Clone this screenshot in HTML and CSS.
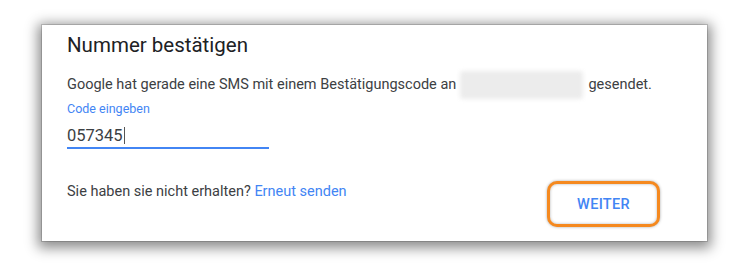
FILE: index.html
```html
<!DOCTYPE html>
<html lang="de">
  <head>
    <meta charset="UTF-8" />
    <title>Nummer bestätigen</title>
    <link rel="stylesheet" href="styles.css">
  </head>
  <body>
    <div class="card">
      <h1>Nummer bestätigen</h1>
      <p class="info">
        Google hat gerade eine SMS mit einem Bestätigungscode an
        <span class="masked"></span> gesendet.
      </p>
      <label class="label">Code eingeben</label>
      <div class="field">057345<span class="caret"></span></div>
      <div class="footer">
        <p class="resend">Sie haben sie nicht erhalten? <a href="#">Erneut senden</a></p>
        <button class="next">WEITER</button>
      </div>
    </div>
  </body>
</html>
```

FILE: styles.css
```css
html {
  background: white;
}
body {
  margin: 0;
  min-height: 267px;
  box-sizing: border-box;
  padding: 25px 0 0 42px;
  font-family: Roboto, "Noto Sans", sans-serif;
}
.card {
  width: 665px;
  height: 216px;
  box-sizing: border-box;
  padding: 7px 47px 12px 25px;
  background: white;
  box-shadow: 0 0 0 1px rgba(0, 0, 0, 0.15), 0 3px 12px 4px rgba(0, 0, 0, 0.45);
}
h1 {
  margin: 0;
  font-size: 20.5px;
  line-height: 26px;
  font-weight: 400;
  color: #202124;
}
.info {
  margin: 17px 0 0;
  font-size: 14.5px;
  line-height: 20px;
  color: #3c4043;
}
.masked {
  display: inline-block;
  width: 123px;
  height: 28px;
  margin: -4px 2px -4px 0;
  vertical-align: middle;
  background: #ececec;
  border-radius: 3px;
  filter: blur(2px);
}
.label {
  display: block;
  margin-top: 6px;
  font-size: 12.5px;
  line-height: 16px;
  color: #4285f4;
}
.field {
  width: 202px;
  margin-top: 9px;
  font-size: 16.5px;
  line-height: 20px;
  color: #3c4043;
  padding-bottom: 1px;
  border-bottom: 2px solid #4285f4;
}
.caret {
  display: inline-block;
  width: 0;
  height: 17px;
  margin-left: 1px;
  vertical-align: -3px;
  border-left: 1px solid #555;
}
.footer {
  display: flex;
  justify-content: space-between;
  align-items: flex-start;
  margin-top: 33px;
}
.resend {
  margin: 0;
  font-size: 14.5px;
  line-height: 20px;
  color: #3c4043;
}
.resend a {
  color: #4285f4;
  text-decoration: none;
}
.next {
  width: 113px;
  height: 46px;
  margin-top: -1px;
  background: white;
  border: 3px solid #f5891f;
  border-radius: 10px;
  box-shadow: 0 0 3px rgba(0, 0, 0, 0.35), inset 0 0 3px rgba(0, 0, 0, 0.3);
  color: #4285f4;
  font-family: Roboto, sans-serif;
  font-size: 14.5px;
  font-weight: 500;
  letter-spacing: 0.3px;
}
```
